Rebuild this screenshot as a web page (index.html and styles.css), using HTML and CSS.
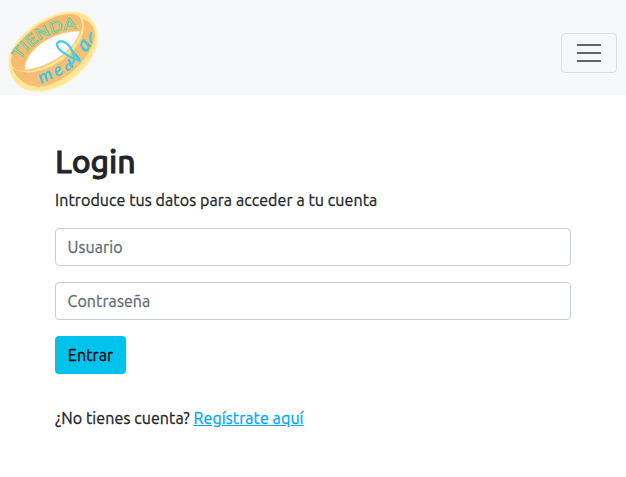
FILE: index.html
```html
<!DOCTYPE html>
<html lang="es">
<head>
<meta charset="utf-8">
<title>Tienda Media</title>
<link rel="stylesheet" href="styles.css">
</head>
<body>
<header class="navbar">
  <a class="brand" href="#" aria-label="Tienda Media">
    <svg class="logo" viewBox="0 0 105 95" width="105" height="95">
      <defs>
        <path id="upper-arc" d="M20 60C28 47 48 29 79 28.5"/>
        <linearGradient id="gold" x1="0" y1="0" x2="1" y2="1"><stop stop-color="#f5b469"/><stop offset="1" stop-color="#f8c57b"/></linearGradient>
      </defs>
      <path class="halo" d="M9 62C8 43 42 12 72 12C89 12 97 24 97 38C97 61 68 91 38 91C20 91 9 80 9 62Z"/>
      <path class="rim" d="M9 62C8 43 42 12 72 12C89 12 97 24 97 38C97 61 68 91 38 91C20 91 9 80 9 62Z"/>
      <path fill="url(#gold)" d="M11 61C11 44 42 15 70 14C81 14 84 22 81 32C75 52 46 71 25 71C16 71 11 68 11 61Z"/>
      <path class="hole" d="M25 70C23 52 50 31 80 31C75 51 48 68 25 70Z"/>
      <path fill="url(#gold)" d="M12 68C22 74 35 74 50 67C72 57 88 37 83 19C94 23 97 33 93 44C85 65 59 86 39 87C24 86 16 77 12 68Z"/>
      <text class="tienda"><textPath href="#upper-arc" textLength="67" lengthAdjust="spacingAndGlyphs">TIENDA</textPath></text>
      <g class="media">
        <text transform="translate(41 84) rotate(-25)">m</text>
        <text transform="translate(57 77.5) rotate(-32)">e</text>
        <text transform="translate(67 72) rotate(-38) scale(1 .7)">d</text>
        <text transform="translate(78.5 61) rotate(-48) scale(1 .85)">i</text>
        <text transform="translate(86 53) rotate(-56) scale(1.15)">a</text>
      </g>
      <path class="flourish" d="M80 61C71 58 56 50 57 44C59 39 67 41 71 49C75 56 76 62 70 65"/>
      <path class="flourish" d="M91 42C90 39 90 36 91 33"/>
    </svg>
  </a>
  <button class="toggler" type="button" aria-label="Menú">
    <svg viewBox="0 0 30 30" width="30" height="30"><path d="M3 7h24M3 15h24M3 23h24"/></svg>
  </button>
</header>
<main class="content">
  <h1>Login</h1>
  <p class="intro">Introduce tus datos para acceder a tu cuenta</p>
  <form>
    <input class="field" type="text" placeholder="Usuario" aria-label="Usuario">
    <input class="field" type="password" placeholder="Contraseña" aria-label="Contraseña">
    <button class="submit" type="button">Entrar</button>
  </form>
  <p class="register">¿No tienes cuenta? <a href="#">Regístrate aquí</a></p>
</main>
</body>
</html>
```
FILE: styles.css
```css
* { box-sizing: border-box; }
body {
  margin: 0;
  background: #fff;
  color: #212529;
  font: 16px/24px Ubuntu, "Noto Sans", sans-serif;
  letter-spacing: .09px;
  -webkit-text-stroke: .3px currentColor;
}
.navbar {
  display: flex;
  justify-content: space-between;
  height: 95px;
  padding-right: 9px;
  background: #f6f8fa;
}
.brand, .logo { display: block; }
.halo { fill: none; stroke: #fff1bd; stroke-width: 2; opacity: .7; }
.rim { fill: #ffe795; }
.hole { fill: #fff; stroke: #fbd28c; stroke-width: .8; }
.tienda {
  font: 500 16px Ubuntu, "Noto Sans", sans-serif;
  fill: #ddd98b;
  -webkit-text-stroke: 0;
  stroke: #68c6a2;
  stroke-width: .8;
}
.media {
  font: italic 700 18px Lato, sans-serif;
  fill: #3fc8e0;
  -webkit-text-stroke: 0;
}
.flourish {
  fill: none;
  stroke: #46cdec;
  stroke-width: 2.3;
  stroke-linecap: round;
}
.toggler {
  align-self: center;
  display: flex;
  align-items: center;
  justify-content: center;
  width: 56px;
  height: 40px;
  margin-top: 11px;
  padding: 0;
  border: 1px solid #dbddde;
  border-radius: 4px;
  background: transparent;
}
.toggler path { stroke: #636466; stroke-width: 2; }
.content { padding: 47px 55px 0; }
h1 {
  margin: 0 0 8px;
  font-size: 32px;
  font-weight: 500;
  line-height: 38px;
  letter-spacing: -.1px;
  -webkit-text-stroke: .9px currentColor;
}
p { margin: 0; white-space: nowrap; }
.intro { margin-bottom: 16px; }
form { display: flex; flex-direction: column; align-items: flex-start; gap: 16px; }
.field, .submit {
  height: 38px;
  border-radius: 4px;
  font: inherit;
  letter-spacing: inherit;
}
.field {
  width: 100%;
  padding: 6px 11.5px;
  border: 1px solid #c7ced4;
}
.field::placeholder { color: #636c74; opacity: 1; }
.submit {
  width: 71px;
  padding: 0;
  border: 0;
  background: #00c3ed;
  color: #000;
}
.register { margin-top: 32px; }
.register a { color: #00a8f5; }
```
